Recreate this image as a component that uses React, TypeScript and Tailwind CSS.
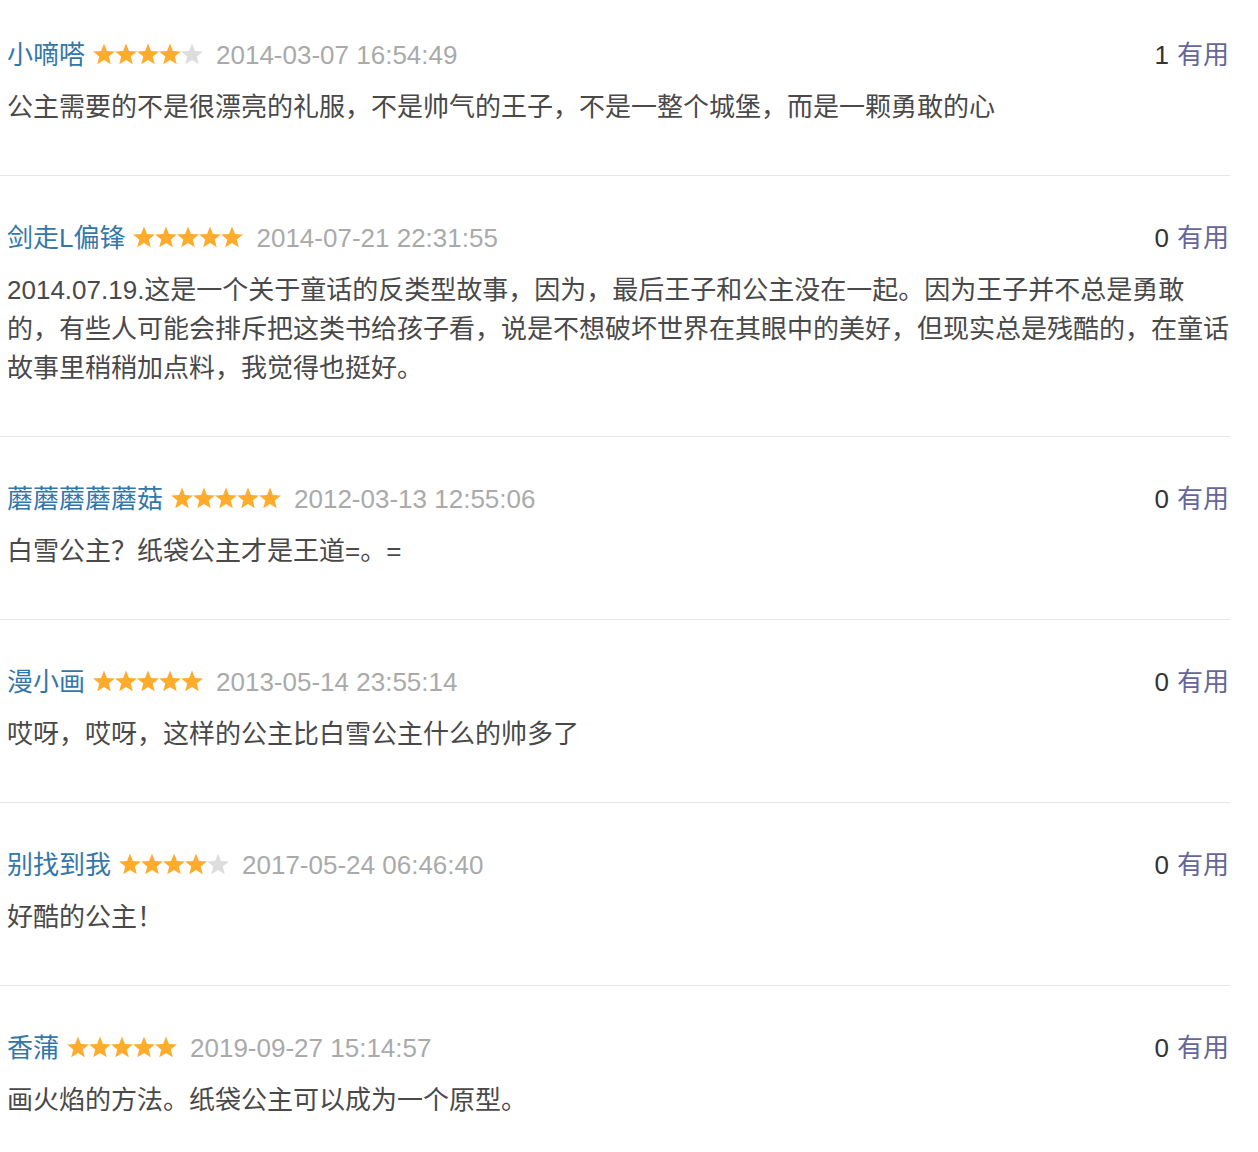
import React from 'react';

interface Review {
  name: string;
  stars: number;
  time: string;
  votes: number;
  text: string;
}

const reviews: Review[] = [
  {
    name: '小嘀嗒',
    stars: 4,
    time: '2014-03-07 16:54:49',
    votes: 1,
    text: '公主需要的不是很漂亮的礼服，不是帅气的王子，不是一整个城堡，而是一颗勇敢的心',
  },
  {
    name: '剑走L偏锋',
    stars: 5,
    time: '2014-07-21 22:31:55',
    votes: 0,
    text: '2014.07.19.这是一个关于童话的反类型故事，因为，最后王子和公主没在一起。因为王子并不总是勇敢的，有些人可能会排斥把这类书给孩子看，说是不想破坏世界在其眼中的美好，但现实总是残酷的，在童话故事里稍稍加点料，我觉得也挺好。',
  },
  { name: '蘑蘑蘑蘑蘑菇', stars: 5, time: '2012-03-13 12:55:06', votes: 0, text: '白雪公主？纸袋公主才是王道=。=' },
  { name: '漫小画', stars: 5, time: '2013-05-14 23:55:14', votes: 0, text: '哎呀，哎呀，这样的公主比白雪公主什么的帅多了' },
  { name: '别找到我', stars: 4, time: '2017-05-24 06:46:40', votes: 0, text: '好酷的公主！' },
  { name: '香蒲', stars: 5, time: '2019-09-27 15:14:57', votes: 0, text: '画火焰的方法。纸袋公主可以成为一个原型。' },
];

const Star = ({ on }: { on: boolean }) => (
  <svg viewBox="0 0 22 22" className="w-[22px] h-[22px]">
    <polygon
      points="11,0.5 13.94,7.95 21.94,8.45 15.76,13.55 17.76,21.3 11,17 4.24,21.3 6.24,13.55 0.06,8.45 8.06,7.95"
      fill={on ? '#ffac2d' : '#dddddd'}
    />
  </svg>
);

const ReviewItem = ({ review }: { review: Review }) => (
  <div className="pt-[42px] first:pt-[35px] pb-[48px] border-b border-[#e6e6e6]">
    {/* header: name, stars, time, votes */}
    <div className="flex items-center justify-between h-[40px] pl-[7px] pr-[1px]">
      <div className="flex items-center">
        <span className="text-[#3377aa]">{review.name}</span>
        <span className="flex ml-[8px] mr-[13px] -mt-[2px]">
          {[1, 2, 3, 4, 5].map((i) => (
            <Star key={i} on={i <= review.stars} />
          ))}
        </span>
        <span className="text-[#aaaaaa]">{review.time}</span>
      </div>
      <div className="flex items-center">
        <span className="text-[#333333] mr-[8px]">{review.votes}</span>
        <span className="text-[#666699]">有用</span>
      </div>
    </div>
    {/* comment body */}
    <p className="mt-[13px] pl-[7px] text-[#494949] leading-[39px]">{review.text}</p>
  </div>
);

export default function App() {
  return (
    <div
      className="w-[1230px] bg-white text-[26px]"
      style={{ fontFamily: '"Liberation Sans", "Noto Sans CJK SC", sans-serif' }}
    >
      {reviews.map((r) => (
        <ReviewItem key={r.time} review={r} />
      ))}
    </div>
  );
}
